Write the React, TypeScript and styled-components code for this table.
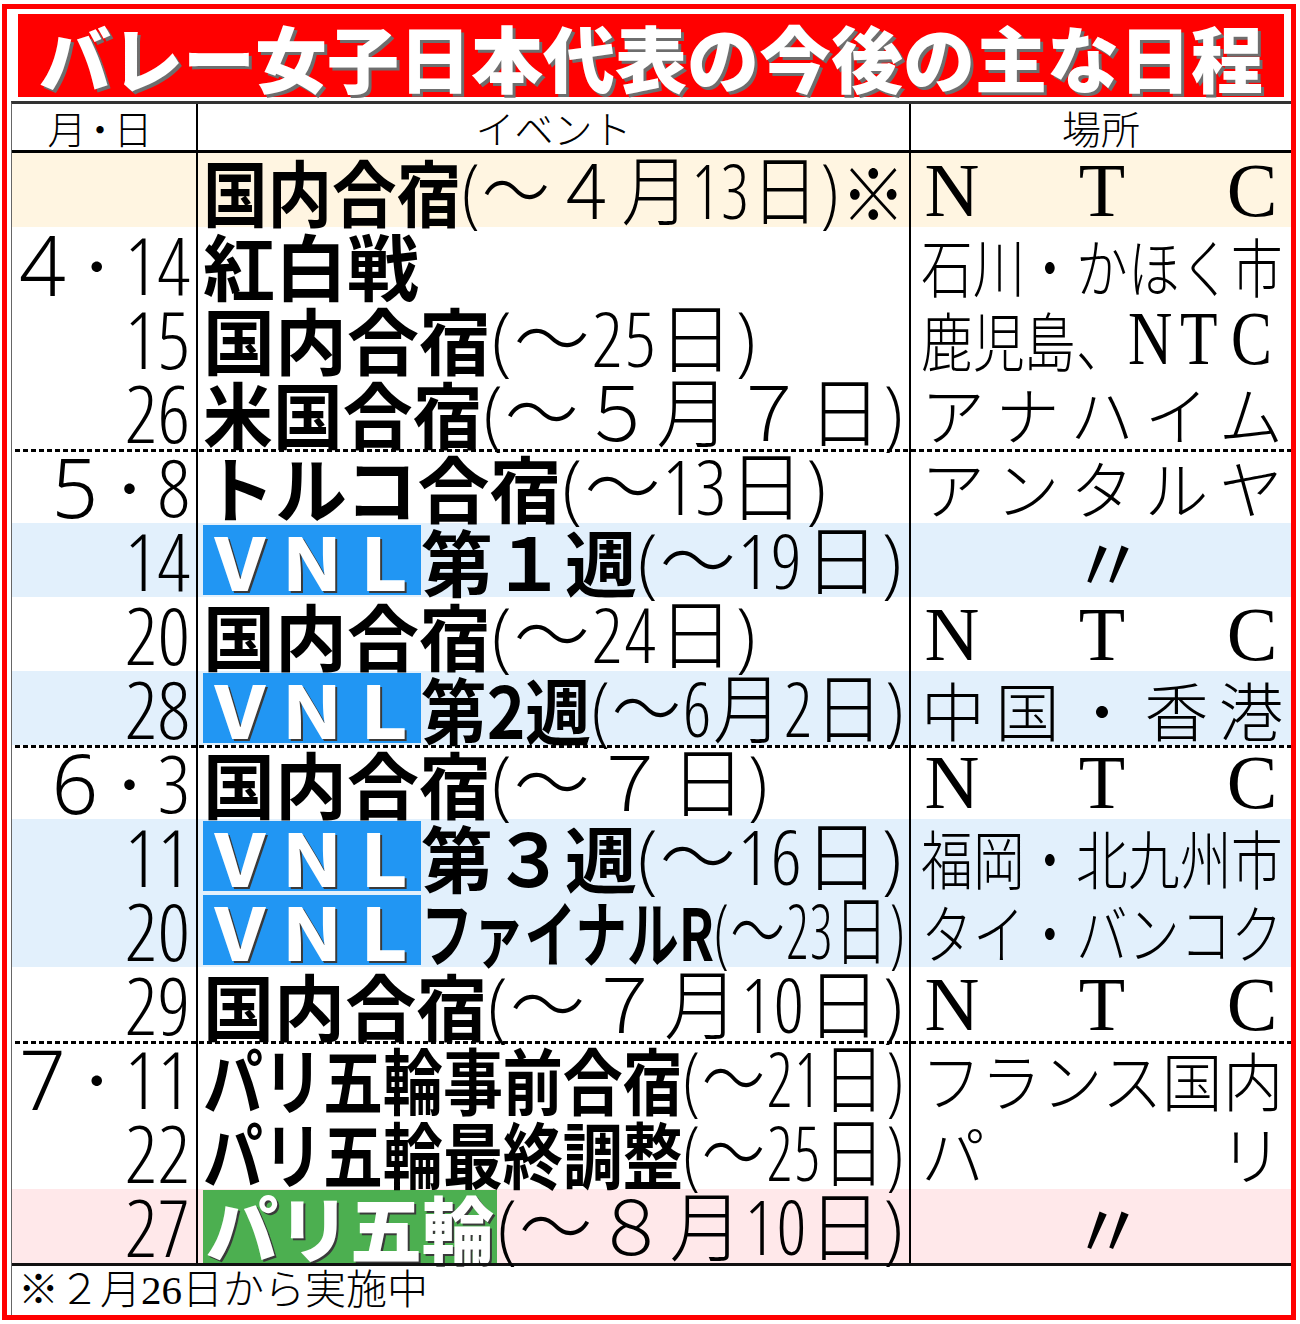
import React, { useLayoutEffect, useRef, useState } from 'react';
import styled, { createGlobalStyle, css } from 'styled-components';

const GOTHIC = '"Noto Sans CJK JP", "Noto Sans", sans-serif';
const NARROW = '"Open Sans", "Noto Sans CJK JP", sans-serif';
const SERIF = '"Liberation Serif", "Noto Sans CJK JP", serif';

// inner width of the place column and the size its characters are set at
const PLACE_WIDTH = 362;
const PLACE_SIZE = 64;

type Tone = 'plain' | 'beige' | 'blue' | 'pink';
type SegKind = 'bold' | 'light' | 'vnl' | 'olympic';

interface Seg {
  kind: SegKind;
  text: string;
}

interface Item {
  month?: string;
  day?: string;
  tone?: Tone;
  dashed?: boolean;
  event: Seg[];
  place: string;
}

const tones: Record<Tone, string> = {
  plain: '#ffffff',
  beige: '#fff5e1',
  blue: '#e2f0fc',
  pink: '#ffe8ea',
};

const b = (text: string): Seg => ({ kind: 'bold', text });
const l = (text: string): Seg => ({ kind: 'light', text });
const VNL: Seg = { kind: 'vnl', text: 'ＶＮＬ' };

const schedule: Item[] = [
  { tone: 'beige', event: [b('国内合宿'), l('(～４月13日)'), b('※')], place: 'NTC' },
  { month: '4', day: '14', event: [b('紅白戦')], place: '石川・かほく市' },
  { day: '15', event: [b('国内合宿'), l('(～25日)')], place: '鹿児島、NTC' },
  { day: '26', event: [b('米国合宿'), l('(～５月７日)')], place: 'アナハイム' },
  { month: '5', day: '8', dashed: true, event: [b('トルコ合宿'), l('(～13日)')], place: 'アンタルヤ' },
  { day: '14', tone: 'blue', event: [VNL, b('第１週'), l('(～19日)')], place: '〃' },
  { day: '20', event: [b('国内合宿'), l('(～24日)')], place: 'NTC' },
  { day: '28', tone: 'blue', event: [VNL, b('第2週'), l('(～6月2日)')], place: '中国・香港' },
  { month: '6', day: '3', dashed: true, event: [b('国内合宿'), l('(～７日)')], place: 'NTC' },
  { day: '11', tone: 'blue', event: [VNL, b('第３週'), l('(～16日)')], place: '福岡・北九州市' },
  { day: '20', tone: 'blue', event: [VNL, b('ファイナルR'), l('(～23日)')], place: 'タイ・バンコク' },
  { day: '29', event: [b('国内合宿'), l('(～７月10日)')], place: 'NTC' },
  { month: '7', day: '11', dashed: true, event: [b('パリ五輪事前合宿'), l('(～21日)')], place: 'フランス国内' },
  { day: '22', event: [b('パリ五輪最終調整'), l('(～25日)')], place: 'パリ' },
  { day: '27', tone: 'pink', event: [{ kind: 'olympic', text: 'パリ五輪' }, l('(～８月10日)')], place: '〃' },
];

const GlobalStyle = createGlobalStyle`
  *, *::before, *::after { box-sizing: border-box; }
  html, body { margin: 0; padding: 0; background: #ffffff; }
  body { width: 1300px; height: 1324px; overflow: hidden; }
`;

const Frame = styled.div`
  width: 1294px;
  height: 1316px;
  margin: 4px 0 0 2px;
  border: 5px solid #ff0000;
  display: flex;
  flex-direction: column;
  background: #ffffff;
`;

const TitleBar = styled.h1`
  margin: 5px 7px 0 11px;
  height: 83px;
  background: #ff0000;
  display: flex;
  align-items: center;
  justify-content: center;
  font-family: ${GOTHIC};
  font-weight: 900;
  font-size: 72px;
  line-height: 1;
  color: #ffffff;
  text-shadow: 3px 3px 0 #6e6e6e;
  white-space: nowrap;
`;

const Table = styled.div`
  flex: 1;
  margin: 4px 0 0 4px;
  border-top: 3px solid #333;
  border-left: 1px solid #666;
  display: flex;
  flex-direction: column;
`;

const columns = '186px 713px 1fr';

const HeadRow = styled.div`
  display: grid;
  grid-template-columns: ${columns};
  height: 49px;
  border-bottom: 3px solid #000;
`;

const HeadCell = styled.div<{ divider?: boolean; tight?: boolean }>`
  display: flex;
  align-items: center;
  justify-content: center;
  padding-right: ${(p) => (p.tight ? 14 : 0)}px;
  font-family: ${GOTHIC};
  font-weight: 300;
  font-size: 39px;
  line-height: 1;
  letter-spacing: ${(p) => (p.tight ? '-6px' : '0')};
  border-right: ${(p) => (p.divider ? '2px solid #000' : 'none')};
`;

const Row = styled.div<{ tone: Tone; dashed?: boolean }>`
  display: grid;
  grid-template-columns: ${columns};
  height: 74px;
  background-color: ${(p) => tones[p.tone]};
  ${(p) =>
    p.dashed &&
    css`
      background-image: linear-gradient(to right, #000 5px, transparent 5px);
      background-size: 8px 3px;
      background-repeat: repeat-x;
      background-position: 3px 0;
    `}
`;

const DateCell = styled.div`
  display: flex;
  align-items: center;
  justify-content: flex-end;
  padding-right: 6px;
  border-right: 2px solid #000;
  white-space: nowrap;
`;

const Month = styled.span`
  font-family: "Noto Sans", sans-serif;
  font-weight: 300;
  font-size: 82px;
  line-height: 68px;
`;

const Dot = styled.span`
  font-family: ${GOTHIC};
  font-weight: 300;
  font-size: 56px;
  line-height: 56px;
  margin-left: 3px;
`;

const Day = styled.span`
  font-family: ${NARROW};
  font-stretch: 75%;
  font-weight: 300;
  font-size: 80px;
  line-height: 68px;
`;

const EventCell = styled.div`
  display: flex;
  align-items: center;
  padding: 0 3px 0 5px;
  border-right: 2px solid #000;
  min-width: 0;
`;

const Bold = styled.span`
  font-family: ${GOTHIC};
  font-weight: 700;
  font-size: 72px;
  line-height: 70px;
`;

const Light = styled.span`
  font-family: ${NARROW};
  font-stretch: 75%;
  font-weight: 300;
  font-size: 76px;
  line-height: 70px;
  letter-spacing: 2px;
`;

const Badge = styled.span<{ kind: 'vnl' | 'olympic' }>`
  flex: none;
  display: flex;
  align-items: center;
  justify-content: center;
  height: ${(p) => (p.kind === 'vnl' ? 70 : 73)}px;
  padding: 0 ${(p) => (p.kind === 'vnl' ? 1 : 3)}px;
  background: ${(p) => (p.kind === 'vnl' ? '#2196f3' : '#4caf50')};
  color: #ffffff;
  font-family: ${GOTHIC};
  font-weight: 900;
  font-size: 72px;
  line-height: 1;
  text-shadow: 2px 2px 0 #3a3a3a;
  white-space: nowrap;
`;

const FitOuter = styled.div`
  flex: 1 1 0;
  min-width: 0;
  height: 100%;
  display: flex;
  align-items: center;
`;

const FitInner = styled.div`
  flex: none;
  display: flex;
  align-items: center;
  white-space: nowrap;
  transform-origin: left center;
`;

const PlaceCell = styled.div<{ center?: boolean }>`
  display: flex;
  align-items: center;
  justify-content: ${(p) => (p.center ? 'center' : 'space-between')};
  padding: 0 8px 0 10px;
  white-space: nowrap;
`;

const Glyph = styled.span<{ latin?: boolean; slot: number; squeeze: number; ditto?: boolean }>`
  display: block;
  flex: none;
  width: ${(p) => p.slot}px;
  line-height: 68px;
  font-family: ${(p) => (p.latin ? '"Liberation Serif", serif' : GOTHIC)};
  font-weight: ${(p) => (p.latin || p.ditto ? 400 : 300)};
  font-size: ${(p) => (p.latin || p.ditto ? 76 : PLACE_SIZE)}px;
  text-align: ${(p) => (p.squeeze < 1 ? 'left' : 'center')};
  transform: scaleX(${(p) => p.squeeze});
  transform-origin: left center;
`;

const Footer = styled.div`
  flex: 1;
  display: flex;
  align-items: center;
  padding-left: 6px;
  border-top: 3px solid #111;
  font-family: ${SERIF};
  font-weight: 300;
  font-size: 41px;
  line-height: 1;
  white-space: nowrap;
`;

// squeezes its content horizontally when it is wider than the space left in the cell
const FitLine = ({ children }: { children: React.ReactNode }) => {
  const outer = useRef<HTMLDivElement>(null);
  const inner = useRef<HTMLDivElement>(null);
  const [scale, setScale] = useState(1);

  useLayoutEffect(() => {
    const fit = () => {
      if (!outer.current || !inner.current) return;
      const natural = inner.current.offsetWidth;
      setScale(natural > 0 ? Math.min(1, outer.current.clientWidth / natural) : 1);
    };
    fit();
    document.fonts?.ready.then(fit);
  }, []);

  return (
    <FitOuter ref={outer}>
      <FitInner ref={inner} style={{ transform: `scaleX(${scale})` }}>
        {children}
      </FitInner>
    </FitOuter>
  );
};

const isLatin = (ch: string) => /[A-Za-z]/.test(ch);

const Place = ({ text }: { text: string }) => {
  const chars = Array.from(text);
  const allLatin = chars.every(isLatin);
  const squeeze = allLatin ? 1 : Math.min(1, PLACE_WIDTH / (chars.length * PLACE_SIZE));
  const slot = allLatin ? 62 : PLACE_SIZE * squeeze;
  return (
    <PlaceCell center={chars.length === 1}>
      {chars.map((ch, i) => (
        <Glyph key={i} latin={isLatin(ch)} slot={slot} squeeze={squeeze} ditto={ch === '〃'}>
          {ch}
        </Glyph>
      ))}
    </PlaceCell>
  );
};

const Event = ({ segs }: { segs: Seg[] }) => {
  const badges = segs.filter((s) => s.kind === 'vnl' || s.kind === 'olympic');
  const rest = segs.filter((s) => s.kind === 'bold' || s.kind === 'light');
  return (
    <EventCell>
      {badges.map((s, i) => (
        <Badge key={i} kind={s.kind as 'vnl' | 'olympic'}>
          {s.text}
        </Badge>
      ))}
      <FitLine>
        {rest.map((s, i) => (s.kind === 'bold' ? <Bold key={i}>{s.text}</Bold> : <Light key={i}>{s.text}</Light>))}
      </FitLine>
    </EventCell>
  );
};

const App = () => {
  return (
    <>
      <GlobalStyle />
      <Frame>
        <TitleBar>バレー女子日本代表の今後の主な日程</TitleBar>
        <Table>
          <HeadRow>
            <HeadCell divider tight>
              月・日
            </HeadCell>
            <HeadCell divider>イベント</HeadCell>
            <HeadCell>場所</HeadCell>
          </HeadRow>
          {schedule.map((item, i) => (
            <Row key={i} tone={item.tone ?? 'plain'} dashed={item.dashed}>
              <DateCell>
                {item.month && (
                  <>
                    <Month>{item.month}</Month>
                    <Dot>・</Dot>
                  </>
                )}
                {item.day && <Day>{item.day}</Day>}
              </DateCell>
              <Event segs={item.event} />
              <Place text={item.place} />
            </Row>
          ))}
          <Footer>※２月26日から実施中</Footer>
        </Table>
      </Frame>
    </>
  );
};

export default App;
